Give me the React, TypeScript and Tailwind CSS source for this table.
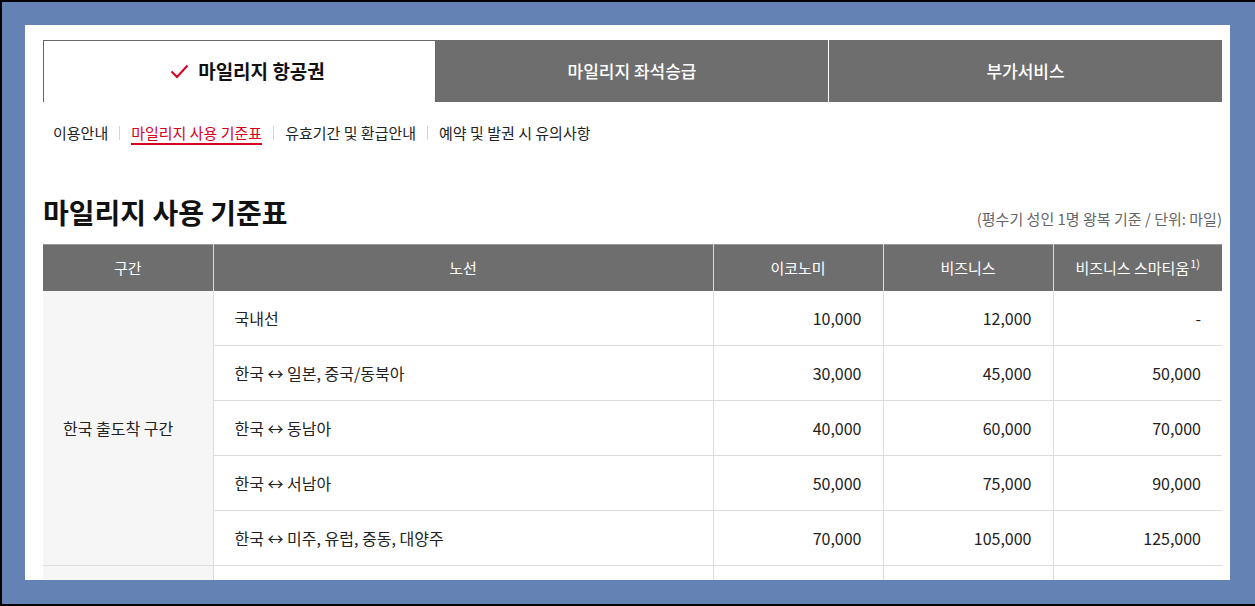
import { Fragment } from "react";

const tabs = ["마일리지 항공권", "마일리지 좌석승급", "부가서비스"];
const subNav = ["이용안내", "마일리지 사용 기준표", "유효기간 및 환급안내", "예약 및 발권 시 유의사항"];

const rows = [
  { route: "국내선", eco: "10,000", biz: "12,000", prm: "-" },
  { route: "한국 ↔ 일본, 중국/동북아", eco: "30,000", biz: "45,000", prm: "50,000" },
  { route: "한국 ↔ 동남아", eco: "40,000", biz: "60,000", prm: "70,000" },
  { route: "한국 ↔ 서남아", eco: "50,000", biz: "75,000", prm: "90,000" },
  { route: "한국 ↔ 미주, 유럽, 중동, 대양주", eco: "70,000", biz: "105,000", prm: "125,000" },
];

export default function App() {
  return (
    <div
      className="w-[1255px] h-[606px] bg-black pl-[2px] pt-[2px] pb-[2px] overflow-hidden"
      style={{ fontFamily: '"Noto Sans CJK KR", "Noto Sans", sans-serif' }}
    >
      <div className="h-full bg-[#6483b4] pl-[23px] pt-[23px]">
        <div className="w-[1205px] h-[555px] bg-white pl-[18px] pt-[15px] overflow-hidden">
          {/* Top tabs */}
          <div className="grid grid-cols-3 w-[1179px] h-[62px]">
            {tabs.map((t, i) =>
              i === 0 ? (
                <div
                  key={t}
                  className="flex items-center justify-center gap-[9px] pl-[16px] border border-b-0 border-[#666] bg-white"
                >
                  <svg width="19" height="15" viewBox="0 0 19 15" fill="none">
                    <path d="M1.5 7.5 L7 13 L17.5 1.5" stroke="#d7001e" strokeWidth="2" />
                  </svg>
                  <span className="text-[19px] font-bold text-[#111]">{t}</span>
                </div>
              ) : (
                <div
                  key={t}
                  className={`flex items-center justify-center bg-[#6e6e6f] text-white text-[17px] font-medium ${
                    i === 1 ? "border-r border-white" : ""
                  }`}
                >
                  {t}
                </div>
              )
            )}
          </div>

          {/* Sub navigation */}
          <div className="flex items-center h-[26px] mt-[18px] pl-[10px] text-[15px] text-[#222]">
            {subNav.map((s, i) => (
              <Fragment key={s}>
                {i > 0 && <span className="w-px h-[14px] bg-[#d5d5d5] mx-[11px]" />}
                <span
                  className={
                    i === 1
                      ? "text-[#d7001e] border-b-2 border-[#d7001e] leading-[20px] pt-[2px]"
                      : "leading-[20px] pt-[2px] border-b-2 border-transparent"
                  }
                >
                  {s}
                </span>
              </Fragment>
            ))}
          </div>

          {/* Title */}
          <div className="flex items-end justify-between w-[1179px] mt-[47px]">
            <h2 className="text-[28px] font-bold text-[#111] leading-[38px]">마일리지 사용 기준표</h2>
            <p className="text-[15px] text-[#666] leading-[20px] mb-[2px]">(평수기 성인 1명 왕복 기준 / 단위: 마일)</p>
          </div>

          {/* Table */}
          <table className="w-[1179px] mt-[13px] border-collapse table-fixed text-[16px] text-[#222]">
            <colgroup>
              <col className="w-[170px]" />
              <col className="w-[500px]" />
              <col className="w-[170px]" />
              <col className="w-[170px]" />
              <col className="w-[169px]" />
            </colgroup>
            <thead>
              <tr className="h-[46px] bg-[#6e6e6f] text-white text-[15px] border-t border-[#999]">
                <th className="font-normal border-r border-[#ddd]">구간</th>
                <th className="font-normal border-r border-[#ddd]">노선</th>
                <th className="font-normal border-r border-[#ddd]">이코노미</th>
                <th className="font-normal border-r border-[#ddd]">비즈니스</th>
                <th className="font-normal">
                  비즈니스 스마티움<sup className="text-[11px] ml-[1px]">1)</sup>
                </th>
              </tr>
            </thead>
            <tbody>
              {rows.map((r, i) => (
                <tr key={r.route} className="h-[55px] border-b border-[#ddd]">
                  {i === 0 && (
                    <td rowSpan={5} className="bg-[#f6f6f6] text-left pl-[20px] border-r border-[#ddd]">
                      한국 출도착 구간
                    </td>
                  )}
                  <td className="pl-[21px] border-r border-[#ddd]">{r.route}</td>
                  <td className="pr-[21px] text-right border-r border-[#ddd]">{r.eco}</td>
                  <td className="pr-[21px] text-right border-r border-[#ddd]">{r.biz}</td>
                  <td className="pr-[21px] text-right">{r.prm}</td>
                </tr>
              ))}
              <tr className="h-[55px]">
                <td className="bg-[#f6f6f6] border-r border-[#ddd]" />
                <td className="border-r border-[#ddd]" />
                <td className="border-r border-[#ddd]" />
                <td className="border-r border-[#ddd]" />
                <td />
              </tr>
            </tbody>
          </table>
        </div>
      </div>
    </div>
  );
}
